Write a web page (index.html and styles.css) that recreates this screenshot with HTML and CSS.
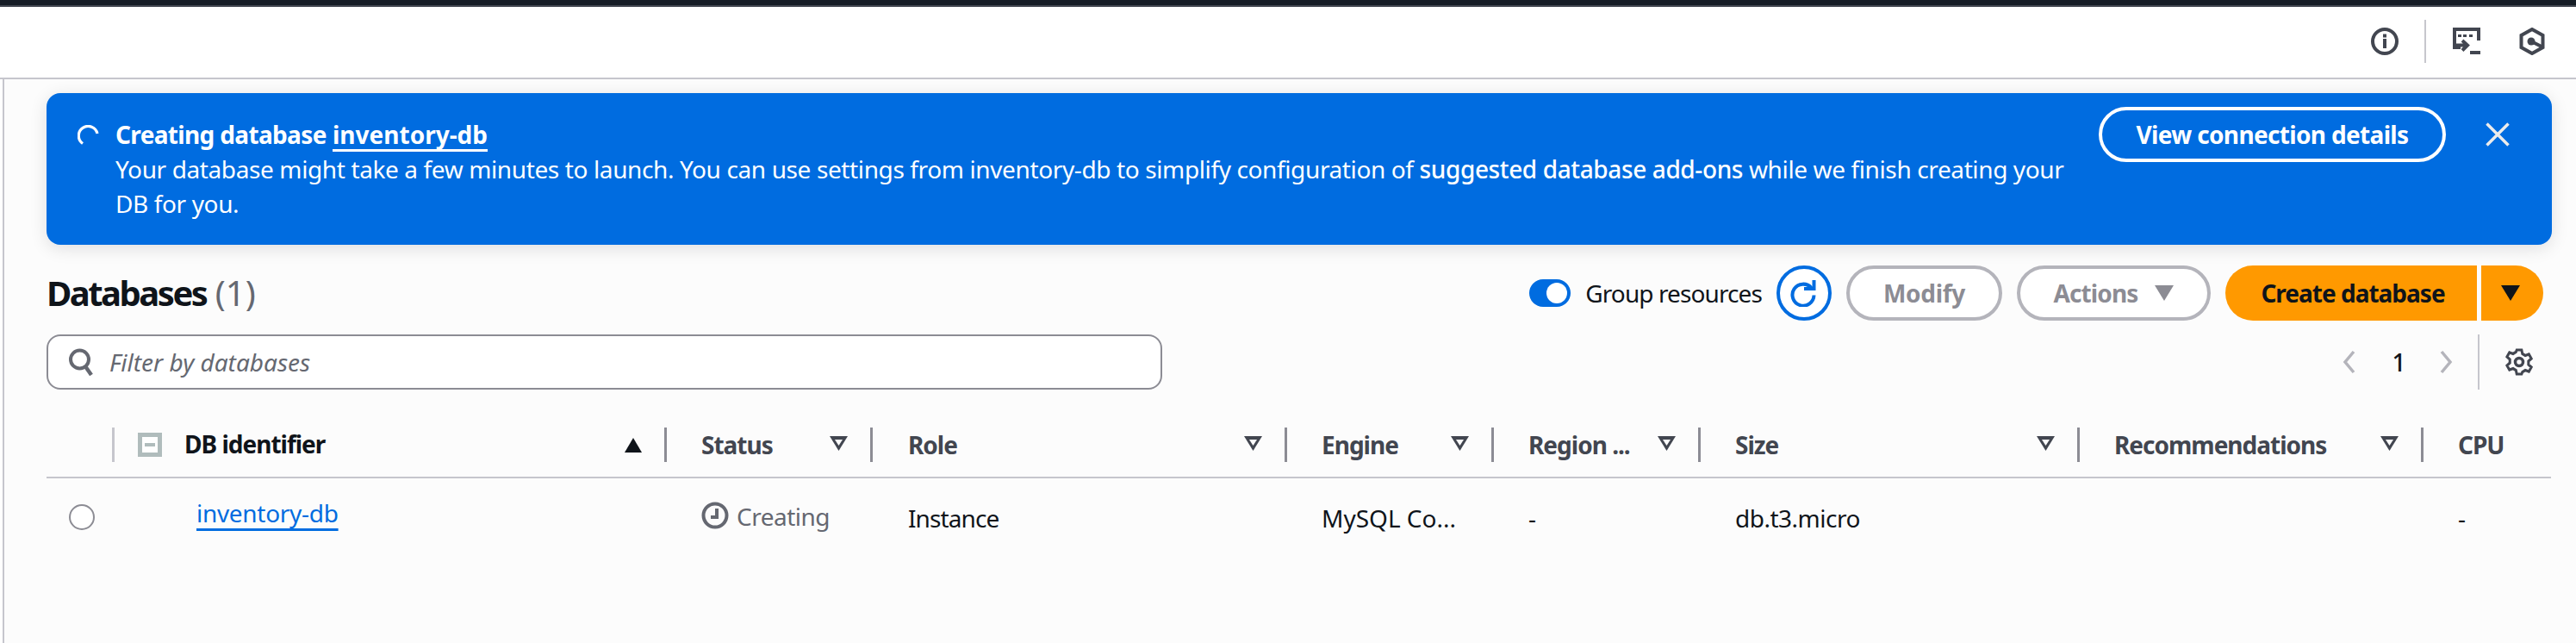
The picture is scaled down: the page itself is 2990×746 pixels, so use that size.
FILE: index.html
```html
<!DOCTYPE html>
<html lang="en">
<head>
<meta charset="utf-8">
<title>Databases</title>
<link rel="stylesheet" href="styles.css">
</head>
<body>
<header class="topbar">
  <div class="tools">
    <svg class="ico info" viewBox="0 0 32 32"><circle cx="16" cy="16" r="14" fill="none" stroke="#424650" stroke-width="4"/><rect x="14" y="13" width="4" height="11" fill="#424650"/><rect x="14" y="7.500" width="4" height="4" fill="#424650"/></svg>
    <span class="tool-sep"></span>
    <svg class="ico term" viewBox="0 0 32 32"><path d="M9 23H2V2h28v13" fill="none" stroke="#424650" stroke-width="4"/><path d="M6 8h4v3H6zM12 8h4v3h-4zM19 8h4v3h-4z" fill="#424650"/><path d="M11 15l6 5.500-6 6M4 20.500h12" fill="none" stroke="#424650" stroke-width="4"/><rect x="20" y="27" width="12" height="4" fill="#424650"/></svg>
    <svg class="ico hex" viewBox="0 0 32 32"><path d="M16 2l12.500 7v14L16 30 3.500 23V9z" fill="none" stroke="#424650" stroke-width="4"/><circle cx="15" cy="16" r="4.500" fill="#424650"/><path d="M15 16l12 6" stroke="#424650" stroke-width="4"/></svg>
  </div>
</header>
<main class="content">
  <section class="flash">
    <svg class="spinner" viewBox="0 0 26 26"><path d="M6 21.500A11 11 0 1 1 23 10" fill="none" stroke="#fff" stroke-width="3.200"/></svg>
    <div class="flash-text">
      <div class="flash-title"><span class="flash-lead">Creating database</span> <a class="flash-link">inventory-db</a></div>
      <div class="flash-body">Your database might take a few minutes to launch. You can use settings from inventory-db to simplify configuration of <b>suggested database add-ons</b> while we finish creating your DB for you.</div>
    </div>
    <button class="view-btn">View connection details</button>
    <svg class="close" viewBox="0 0 28 28"><path d="M1.500 1.500l25 25M26.500 1.500l-25 25" stroke="#ececec" stroke-width="3.500" fill="none"/></svg>
  </section>

  <div class="toolbar">
    <h2 class="title"><span class="title-main">Databases</span> <span class="count">(1)</span></h2>
    <div class="actions">
      <span class="toggle"><span class="knob"></span></span>
      <span class="toggle-label">Group resources</span>
      <button class="refresh"><svg viewBox="0 0 32 32" class="refresh-ico"><path d="M24.500 10A12.500 12.500 0 1 0 27.500 18.500" fill="none" stroke="#006ce0" stroke-width="4"/><path d="M16 11h11.500V1" fill="none" stroke="#006ce0" stroke-width="4"/></svg></button>
      <button class="btn modify">Modify</button>
      <button class="btn acts">Actions <i class="tri-down grey"></i></button>
      <span class="split">
        <button class="primary">Create database</button>
        <button class="primary-caret"><i class="tri-down dark"></i></button>
      </span>
    </div>
  </div>

  <div class="filterbar">
    <label class="filter">
      <svg class="search" viewBox="0 0 28 32"><circle cx="12.500" cy="13" r="10.500" fill="none" stroke="#656871" stroke-width="4"/><path d="M19 21l7 10" stroke="#656871" stroke-width="4.500"/></svg>
      <span class="placeholder">Filter by databases</span>
    </label>
    <div class="pager">
      <svg class="chev" viewBox="0 0 16 28"><path d="M13 2L3 14l10 12" fill="none" stroke="#b4b4bb" stroke-width="3.500"/></svg>
      <span class="page">1</span>
      <svg class="chev" viewBox="0 0 16 28"><path d="M3 2l10 12L3 26" fill="none" stroke="#b4b4bb" stroke-width="3.500"/></svg>
      <span class="pager-sep"></span>
      <svg class="gear" viewBox="0 0 32 32"><path d="M13 2h6l1 4.500 3.500 2 4.500-1.500 3 5-3.500 3v4l3.500 3-3 5-4.500-1.500-3.500 2L19 30h-6l-1-4.500-3.500-2L4 25l-3-5 3.500-3v-4L1 10l3-5 4.500 1.500 3.500-2z" fill="none" stroke="#424650" stroke-width="3.200" transform="translate(1 0) scale(.94 1)"/><circle cx="16" cy="16" r="4.500" fill="none" stroke="#424650" stroke-width="3.500"/></svg>
    </div>
  </div>

  <div class="table">
    <div class="th th-select"></div>
    <div class="th th-id"><span class="check"><span class="dash"></span></span><span class="th-main">DB identifier</span><i class="tri-up"></i></div>
    <div class="th"><span>Status</span><i class="filter-tri"></i></div>
    <div class="th th-role"><span>Role</span><i class="filter-tri"></i></div>
    <div class="th"><span>Engine</span><i class="filter-tri"></i></div>
    <div class="th"><span>Region ...</span><i class="filter-tri"></i></div>
    <div class="th"><span>Size</span><i class="filter-tri"></i></div>
    <div class="th"><span>Recommendations</span><i class="filter-tri"></i></div>
    <div class="th th-last"><span>CPU</span></div>

    <div class="td td-radio"><span class="radio"></span></div>
    <div class="td td-link"><a class="db-link">inventory-db</a></div>
    <div class="td td-status"><svg class="clock" viewBox="0 0 32 32"><circle cx="16" cy="16" r="13.500" fill="none" stroke="#656871" stroke-width="4"/><path d="M18 8v10h-7" fill="none" stroke="#656871" stroke-width="4"/></svg><span>Creating</span></div>
    <div class="td td-tight">Instance</div>
    <div class="td">MySQL Co...</div>
    <div class="td">-</div>
    <div class="td td-mid">db.t3.micro</div>
    <div class="td"></div>
    <div class="td">-</div>
  </div>
</main>
</body>
</html>
```
FILE: styles.css
```css
* { box-sizing: border-box; }
html, body { margin: 0; height: 100%; }
body {
  font-family: "Noto Sans", "Open Sans", sans-serif;
  font-size: 28px;
  line-height: 40px;
  color: #0f141a;
  background: #fff;
  overflow: hidden;
}
.topbar {
  height: 92px;
  background: #fff;
  border-top: 6px solid #161d26;
  border-bottom: 2px solid #c6c6cd;
  box-shadow: inset 0 2px 0 #424650;
  display: flex;
  justify-content: flex-end;
  align-items: center;
  padding-right: 35px;
}
.tools { display: flex; align-items: center; }
.ico { width: 32px; height: 32px; display: block; }
.tool-sep { width: 2px; height: 50px; background: #c6c6cd; margin: 0 31px 0 30px; }
.hex { margin-left: 44px; }
.content {
  margin-left: 3px;
  height: 654px;
  border-left: 2px solid #c6c6cd;
  background: #fcfcfc;
  padding: 16px 28px 0 49px;
}
.flash {
  height: 176px;
  background: #006ce0;
  border-radius: 16px;
  box-shadow: 0 4px 20px rgba(0, 7, 22, .12);
  color: #fff;
  display: flex;
  align-items: flex-start;
  padding: 16px 49px 0 36px;
}
.spinner { width: 26px; height: 26px; margin: 21px 18px 0 0; flex: none; }
.flash-text { flex: 1; padding-top: 12px; max-width: 2298px; }
.flash-title { font-weight: 700; }
.flash-lead { letter-spacing: -.65px; }
.flash-link {
  text-decoration: underline 3px #fff;
  text-underline-offset: 6px;
  text-decoration-skip-ink: none;
}
.flash-body { letter-spacing: -.38px; }
.flash-body b { font-weight: 500; }
.view-btn {
  flex: none;
  margin-left: 38px;
  width: 403px;
  height: 64px;
  border: 4px solid #fff;
  border-radius: 32px;
  background: transparent;
  color: #fff;
  font: 700 28px/40px "Noto Sans", sans-serif;
  letter-spacing: -.66px;
  padding: 0;
}
.close { width: 28px; height: 28px; flex: none; margin: 18px 0 0 46px; }
.toolbar {
  display: flex;
  justify-content: space-between;
  align-items: center;
  height: 64px;
  margin-top: 24px;
  padding: 0 10px 0 0;
}
.title { margin: 0; font-size: 40px; line-height: 48px; font-weight: 700; }
.title-main { letter-spacing: -2.5px; }
.count { font-weight: 400; color: #656871; }
.actions { display: flex; align-items: center; }
.toggle {
  width: 48px; height: 32px; border-radius: 16px; background: #006ce0;
  display: flex; align-items: center; justify-content: flex-end; padding-right: 4px;
}
.knob { width: 24px; height: 24px; border-radius: 50%; background: #fff; }
.toggle-label { margin: 0 17px 0 17px; letter-spacing: -.9px; }
.refresh {
  width: 64px; height: 64px; border: 4px solid #006ce0; border-radius: 50%;
  background: #fff; padding: 0; display: flex; align-items: center; justify-content: center;
}
.refresh-ico { width: 32px; height: 32px; }
.btn {
  height: 64px; border: 4px solid #b4b4bb; border-radius: 32px; background: #fff;
  color: #8c8c94; font: 700 28px/40px "Noto Sans", sans-serif; padding: 0;
  display: flex; align-items: center; justify-content: center;
  letter-spacing: -.3px;
}
.modify { width: 181px; margin-left: 17px; }
.acts { width: 225px; margin-left: 17px; gap: 20px; letter-spacing: -.9px; }
.tri-down { display: block; width: 0; height: 0; border-left: 11px solid transparent; border-right: 11px solid transparent; border-top: 18px solid; }
.tri-down.grey { color: #8c8c94; }
.tri-down.dark { color: #0f141a; }
.split { display: flex; margin-left: 17px; gap: 5px; }
.primary {
  width: 292px; height: 64px; border: 0; border-radius: 32px 0 0 32px; background: #ff9900;
  color: #0f141a; font: 700 28px/40px "Noto Sans", sans-serif; padding: 0 0 0 4px;
  letter-spacing: -1px;
}
.primary-caret {
  width: 72px; height: 64px; border: 0; border-radius: 0 32px 32px 0; background: #ff9900;
  display: flex; align-items: center; justify-content: center; padding: 0 4px 0 0;
}
.filterbar {
  display: flex; justify-content: space-between; align-items: center;
  height: 64px; margin-top: 16px;
}
.filter {
  width: 1295px; height: 64px; background: #fff; border: 2px solid #8c8c94; border-radius: 16px;
  display: flex; align-items: center; padding-left: 24px;
}
.search { width: 28px; height: 32px; }
.placeholder { font-style: italic; color: #656871; margin-left: 19px; }
.pager { display: flex; align-items: center; padding-right: 22px; }
.chev { width: 16px; height: 28px; }
.page { width: 96px; padding-left: 3px; text-align: center; font-weight: 500; }
.pager-sep { width: 2px; height: 64px; background: #c6c6cd; margin: 0 30px 0 29px; }
.gear { width: 32px; height: 32px; }
.table {
  display: grid;
  grid-template-columns: 77px 641px 239px 481px 240px 240px 440px 399px 150px;
  margin-top: 44px;
}
.th {
  height: 59px;
  border-bottom: 2px solid #c6c6cd;
  display: flex;
  align-items: flex-start;
  justify-content: space-between;
  padding: 0 27px 0 42px;
  font-weight: 700;
  color: #424650;
  position: relative;
  letter-spacing: -1px;
}
.th::after {
  content: ""; position: absolute; right: -2px; top: 0; width: 3px; height: 40px; background: #8c8c94;
}
.th-select::after { background: #c6c6cd; }
.th-last::after { display: none; }
.th-role { padding-left: 43px; }
.th-id { padding: 0 27px 0 29px; color: #0f141a; justify-content: flex-start; }
.th-id .th-main { margin-left: 26px; flex: 1; margin-top: -1px; }
.check {
  width: 28px; height: 28px; margin-top: 6px; border: 5px solid #b0bcbc; flex: none;
  display: flex; align-items: center; justify-content: center; background: #fff;
}
.dash { width: 12px; height: 4px; background: #b0bcbc; }
.tri-up { width: 0; height: 0; margin-top: 12px; border-left: 10px solid transparent; border-right: 10px solid transparent; border-bottom: 17px solid #0f141a; }
.filter-tri { width: 21px; height: 17px; margin-top: 10px; position: relative; display: block; }
.filter-tri::before { content: ""; position: absolute; inset: 0; background: #424650; clip-path: polygon(0 0, 100% 0, 50% 100%); }
.filter-tri::after { content: ""; position: absolute; left: 6px; top: 4px; width: 9px; height: 7px; background: #fcfcfc; clip-path: polygon(0 0, 100% 0, 50% 100%); }
.td { padding: 26px 0 0 42px; height: 80px; }
.td-tight { letter-spacing: -.9px; padding-left: 43px; }
.td-mid { letter-spacing: -.5px; }
.td-radio { padding: 30px 0 0 26px; }
.radio { display: block; width: 30px; height: 30px; border: 2px solid #8c8c94; border-radius: 50%; background: #fff; }
.td-link { padding: 20px 0 0 97px; letter-spacing: -.3px; }
.db-link {
  color: #006ce0;
  text-decoration: underline 3px #006ce0;
  text-underline-offset: 7px;
  text-decoration-skip-ink: none;
}
.td-status { display: flex; align-items: flex-start; gap: 9px; padding-top: 24px; color: #656871; letter-spacing: -.5px; }
.clock { width: 32px; height: 32px; margin-top: 3px; flex: none; }
```
